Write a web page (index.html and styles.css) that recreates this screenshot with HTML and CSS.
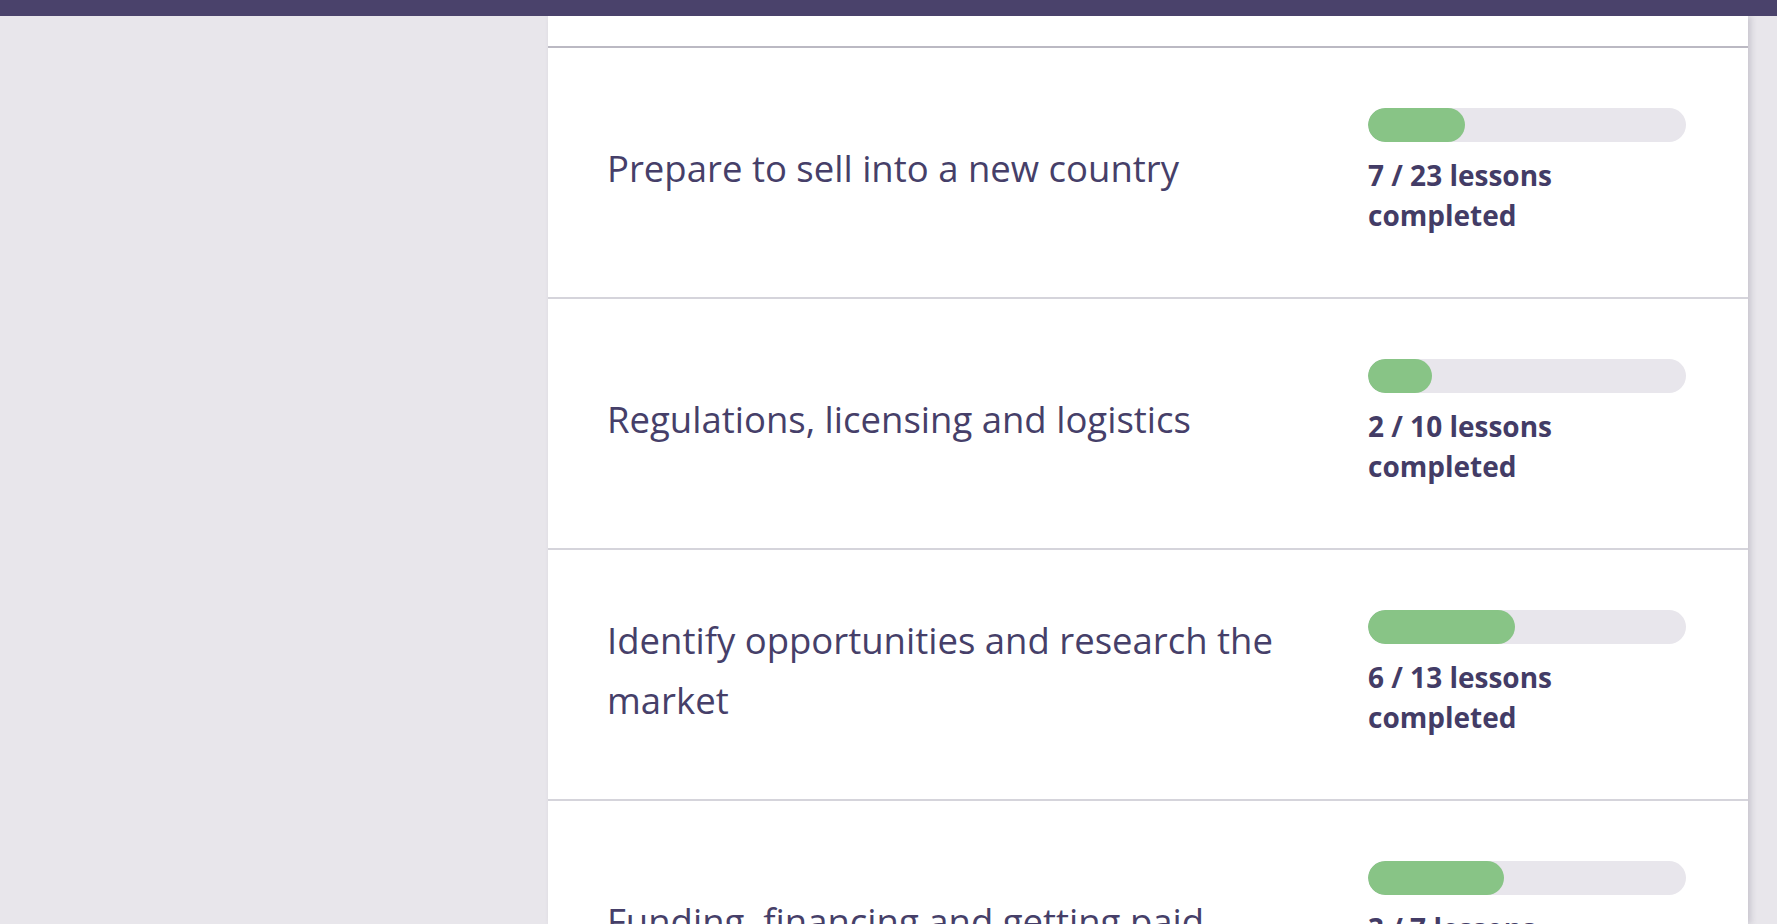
FILE: index.html
```html
<!DOCTYPE html>
<html lang="en">
<head>
<meta charset="utf-8">
<title>Courses</title>
<link rel="stylesheet" href="styles.css">
</head>
<body>
<header class="topbar"></header>
<div class="layout">
  <aside class="sidebar"></aside>
  <main class="card">
    <div class="card-head"></div>
    <ul class="topics">
      <li class="topic">
        <h2 class="topic-title">Prepare to sell into a new country</h2>
        <div class="progress">
          <div class="track"><div class="fill" style="width: 30.4%"></div></div>
          <p class="progress-text">7 / 23 lessons completed</p>
        </div>
      </li>
      <li class="topic">
        <h2 class="topic-title">Regulations, licensing and logistics</h2>
        <div class="progress">
          <div class="track"><div class="fill" style="width: 20%"></div></div>
          <p class="progress-text">2 / 10 lessons completed</p>
        </div>
      </li>
      <li class="topic">
        <h2 class="topic-title">Identify opportunities and research the market</h2>
        <div class="progress">
          <div class="track"><div class="fill" style="width: 46.2%"></div></div>
          <p class="progress-text">6 / 13 lessons completed</p>
        </div>
      </li>
      <li class="topic">
        <h2 class="topic-title">Funding, financing and getting paid</h2>
        <div class="progress">
          <div class="track"><div class="fill" style="width: 42.9%"></div></div>
          <p class="progress-text">3 / 7 lessons completed</p>
        </div>
      </li>
    </ul>
  </main>
  <div class="gutter"></div>
</div>
</body>
</html>
```

FILE: styles.css
```css
* { box-sizing: border-box; }

html, body {
  margin: 0;
  padding: 0;
  height: 924px;
  overflow: hidden;
  background: #e8e6eb;
  font-family: "Open Sans", "Noto Sans", sans-serif;
  color: #463f69;
}

.topbar {
  height: 16px;
  background: #4a426b;
  position: relative;
  z-index: 2;
}

.layout {
  display: flex;
  height: 908px;
}

.sidebar {
  width: 548px;
  flex: none;
  background: #e8e6eb;
}

.card {
  width: 1200px;
  flex: none;
  background: #ffffff;
  box-shadow: 3px 0 6px rgba(60, 55, 85, 0.18);
  position: relative;
  z-index: 1;
}

.gutter {
  flex: 1;
  background: #e8e6eb;
}

.card-head {
  height: 32px;
  border-bottom: 2px solid #bbb9c3;
}

.topics {
  list-style: none;
  margin: 0;
  padding: 0;
}

.topic {
  height: 251px;
  border-bottom: 2px solid #d5d4db;
  display: flex;
  align-items: center;
  gap: 60px;
  padding: 0 62px 0 59px;
}

.topic-title {
  flex: 1;
  margin: 0 0 9px 0;
  font-size: 36.5px;
  line-height: 60px;
  font-weight: 400;
  color: #463f69;
}

.progress {
  width: 318px;
  flex: none;
  height: 130px;
}

.track {
  height: 34px;
  border-radius: 17px;
  background: #e8e6ec;
  overflow: hidden;
}

.fill {
  height: 100%;
  border-radius: 17px;
  background: #88c486;
}

.progress-text {
  margin: 13px 0 0 0;
  width: 200px;
  font-size: 28px;
  line-height: 40px;
  font-weight: 700;
  color: #433c66;
}
```
